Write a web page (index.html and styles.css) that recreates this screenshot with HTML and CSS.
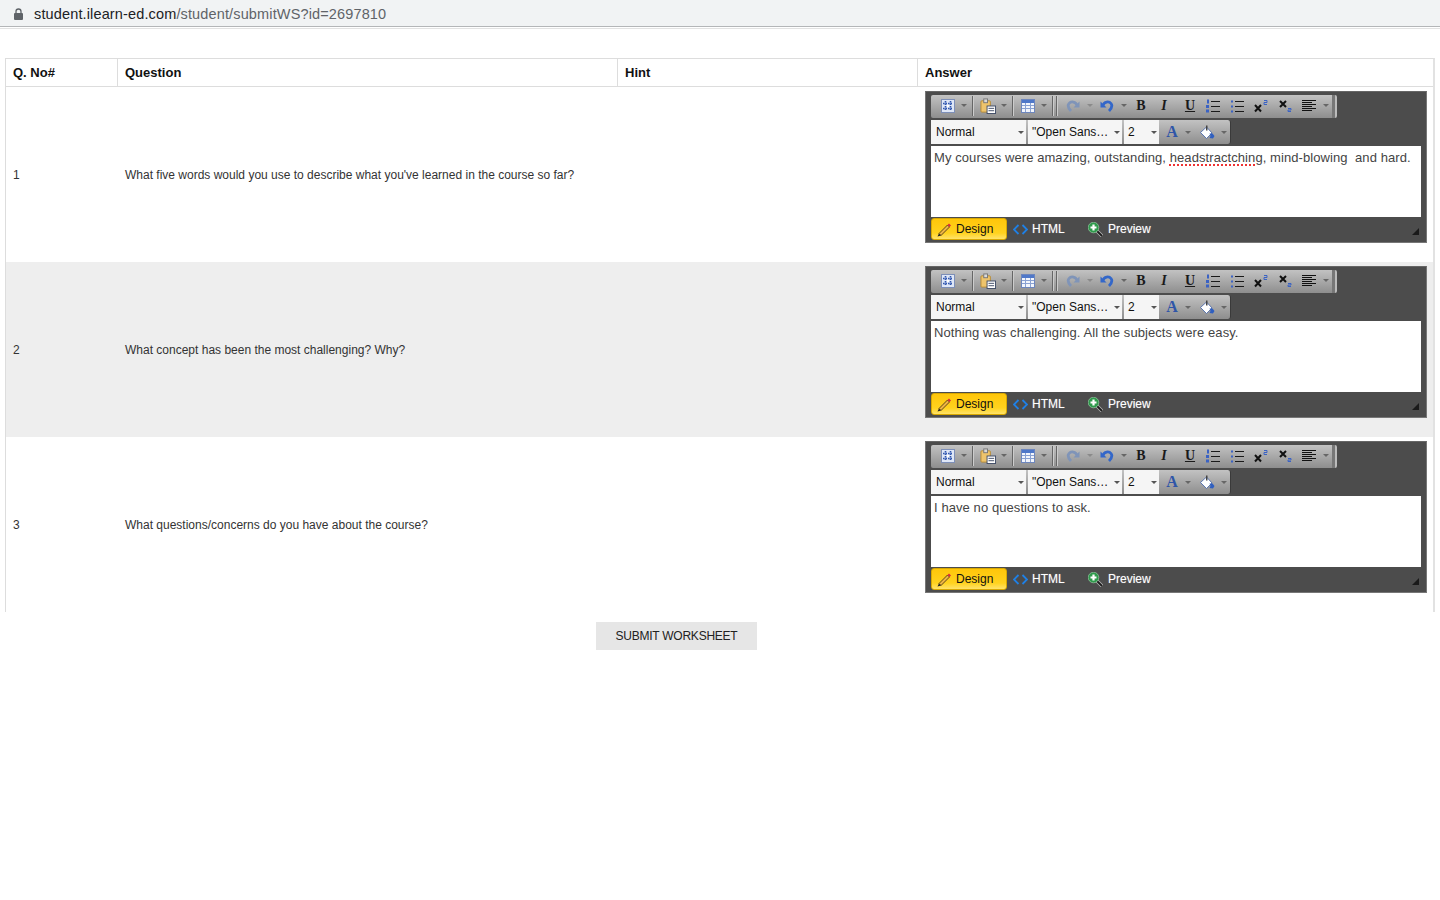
FILE: index.html
```html
<!DOCTYPE html>
<html lang="en">
<head>
<meta charset="utf-8">
<title>Submit Worksheet</title>
<link rel="stylesheet" href="styles.css">
</head>
<body>
<svg class="defs" width="0" height="0" aria-hidden="true">
  <defs>
    <symbol id="i-grid" viewBox="0 0 14 14"><rect x=".5" y=".5" width="13" height="13" fill="#dfe7f7" stroke="#7d8fb8"/><path d="M4.500 2v10M9.500 2v10M2 4.500h10M2 9.500h10" stroke="#2f56b0" stroke-width="1.600" stroke-dasharray="1.500 1"/><path d="M6 6h2v2H6z" fill="#fff"/></symbol>
    <symbol id="i-paste" viewBox="0 0 17 17"><rect x="1" y="3" width="10" height="12" rx="1" fill="#eec46c" stroke="#b58a34"/><rect x="4" y="1" width="4" height="4" fill="#d9d9d9" stroke="#777"/><rect x="7.500" y="8.500" width="9" height="8" fill="#fff" stroke="#3f4c66"/><path d="M9 11h6M9 13.500h6" stroke="#3f4c66"/></symbol>
    <symbol id="i-table" viewBox="0 0 14 14"><rect x=".5" y=".5" width="13" height="13" fill="#f3f6fc" stroke="#6d86bd"/><rect x="1" y="1" width="12" height="3" fill="#4f78c9"/><path d="M1 6.500h12M1 9.500h12M4.500 4v9M9.500 4v9" stroke="#8aa2d3"/></symbol>
    <symbol id="i-redo" viewBox="0 0 14 13"><path d="M11 6C10 2 5 1.500 3 4 1.500 6 2.500 9 5 11.500" fill="none" stroke="#7f94b8" stroke-width="2.800"/><path d="M13.500 2v6h-6z" fill="#7f94b8"/></symbol>
    <symbol id="i-undo" viewBox="0 0 14 13"><path d="M3 6C4 2 9 1.500 11 4 12.500 6 11.500 9 9 11.500" fill="none" stroke="#3367c9" stroke-width="2.800"/><path d="M.5 2v6h6z" fill="#3367c9"/></symbol>
    <symbol id="i-ol" viewBox="0 0 14 14"><path d="M5 2.500h9M5 7.500h9M5 12.500h9" stroke="#1a1a1a"/><path d="M1 .5h2v4H1zM0 6h3v3H0zM0 10.500h3v3H0z" fill="#3a62c4"/></symbol>
    <symbol id="i-ul" viewBox="0 0 14 14"><path d="M5 2.500h9M5 7.500h9M5 12.500h9" stroke="#1a1a1a"/><path d="M1 1.500h2v2H1zM1 6.500h2v2H1zM1 11.500h2v2H1z" fill="#3a62c4"/></symbol>
    <symbol id="i-sup" viewBox="0 0 14 14"><path d="M1 6l6 6.500M7 6l-6 6.500" stroke="#111" stroke-width="2"/><path d="M10 1.500h3v2h-3v2h3" fill="none" stroke="#3a62c4"/></symbol>
    <symbol id="i-sub" viewBox="0 0 14 14"><path d="M1 2l6 6M7 2L1 8" stroke="#111" stroke-width="2"/><path d="M9 9.500h3V11H9v1.500h3" fill="none" stroke="#3a62c4"/></symbol>
    <symbol id="i-align" viewBox="0 0 14 14"><path d="M0 1.500h14M0 3.500h10M0 5.500h14M0 7.500h10M0 9.500h14M0 11.500h10" stroke="#111"/></symbol>
    <symbol id="i-back" viewBox="0 0 15 14"><path d="M.5 7.500L6.500 2l5.500 6-5.500 5.500z" fill="#fff" stroke="#3d5fa8" stroke-width=".8"/><path d="M6 .5h1.500v5H6z" fill="#444"/><path d="M9.500 8.500h3l2 2.500-1.500 2.500-3.500-.5 1-2z" fill="#2f5fc0"/></symbol>
    <symbol id="i-pencil" viewBox="0 0 15 15"><path d="M2 11.500L10.500 3l2 2L4 13.500z" fill="#eeb545" stroke="#4f3a12" stroke-width=".9"/><path d="M10.500 3L12 1.500 14 3.500 12.500 5z" fill="#d8283f"/><path d="M.5 14.500L2 11.500l2 2z" fill="#222"/></symbol>
    <symbol id="i-code" viewBox="0 0 15 11"><path d="M5.500 1L1 5.500 5.500 10M9.500 1L14 5.500 9.500 10" fill="none" stroke="#1f80e6" stroke-width="1.800"/></symbol>
    <symbol id="i-zoom" viewBox="0 0 15 15"><path d="M8.500 8.500l5.500 5.500" stroke="#b5b5b5" stroke-width="3.400"/><path d="M8.500 8.500l5.500 5.500" stroke="#1c1c1c" stroke-width="1.800"/><circle cx="5.500" cy="5.500" r="5.300" fill="#2f9a4c" stroke="#a8d8b4" stroke-width=".6"/><path d="M2.500 5.500h6M5.500 2.500v6" stroke="#fff" stroke-width="2.200"/></symbol>
  </defs>
</svg>

<header class="address-bar">
  <svg class="lock" width="9" height="12" viewBox="0 0 9 12"><path d="M2 5V3.500a2.500 2.500 0 0 1 5 0V5" fill="none" stroke="#5f6368" stroke-width="1.300"/><rect y="5" width="9" height="7" rx="1" fill="#5f6368"/></svg>
  <span class="url"><span class="host">student.ilearn-ed.com</span>/student/submitWS?id=2697810</span>
</header>

<main class="page">
  <table class="sheet">
    <colgroup><col class="c-no"><col class="c-q"><col class="c-hint"><col class="c-ans"></colgroup>
    <thead>
      <tr><th>Q. No#</th><th>Question</th><th>Hint</th><th>Answer</th></tr>
    </thead>
    <tbody>
      <tr>
        <td>1</td>
        <td>What five words would you use to describe what you've learned in the course so far?</td>
        <td></td>
        <td class="answer">
          <div class="editor">
            <div class="toolbar-row">
              <div class="strip">
                <svg class="ic ml10"><use href="#i-grid"/></svg><i class="arrow a6"></i><i class="sep"></i>
                <svg class="ic w16 ml7"><use href="#i-paste"/></svg><i class="arrow"></i><i class="sep"></i>
                <svg class="ic ml8"><use href="#i-table"/></svg><i class="arrow a6"></i><i class="sep"></i><i class="sep close"></i>
                <svg class="ic ml9"><use href="#i-redo"/></svg><i class="arrow a7 dim"></i>
                <svg class="ic ml7"><use href="#i-undo"/></svg><i class="arrow a7"></i>
                <b class="tb bold">B</b><b class="tb ital">I</b><b class="tb under">U</b>
                <svg class="ic ml10"><use href="#i-ol"/></svg>
                <svg class="ic ml10"><use href="#i-ul"/></svg>
                <svg class="ic ml10"><use href="#i-sup"/></svg>
                <svg class="ic ml11"><use href="#i-sub"/></svg>
                <svg class="ic ml9"><use href="#i-align"/></svg><i class="arrow a7"></i>
              </div>
            </div>
            <div class="toolbar-row second">
              <div class="strip short">
                <span class="select s-format">Normal<i class="down"></i></span>
                <span class="select s-font">"Open Sans…<i class="down"></i></span>
                <span class="select s-size">2<i class="down"></i></span>
                <b class="fore">A</b><i class="arrow a7"></i>
                <svg class="ic w15 ml9"><use href="#i-back"/></svg><i class="arrow a6"></i>
              </div>
            </div>
            <div class="content">My courses were amazing, outstanding, <span class="misspelt">headstractching</span>, mind-blowing&nbsp; and hard.</div>
            <div class="modes">
              <span class="mode active"><svg class="mode-ic"><use href="#i-pencil"/></svg>Design</span>
              <span class="mode html"><svg class="mode-ic code"><use href="#i-code"/></svg>HTML</span>
              <span class="mode preview"><svg class="mode-ic"><use href="#i-zoom"/></svg>Preview</span>
              <i class="grip"></i>
            </div>
          </div>
        </td>
      </tr>
      <tr class="alt">
        <td>2</td>
        <td>What concept has been the most challenging? Why?</td>
        <td></td>
        <td class="answer">
          <div class="editor">
            <div class="toolbar-row">
              <div class="strip">
                <svg class="ic ml10"><use href="#i-grid"/></svg><i class="arrow a6"></i><i class="sep"></i>
                <svg class="ic w16 ml7"><use href="#i-paste"/></svg><i class="arrow"></i><i class="sep"></i>
                <svg class="ic ml8"><use href="#i-table"/></svg><i class="arrow a6"></i><i class="sep"></i><i class="sep close"></i>
                <svg class="ic ml9"><use href="#i-redo"/></svg><i class="arrow a7 dim"></i>
                <svg class="ic ml7"><use href="#i-undo"/></svg><i class="arrow a7"></i>
                <b class="tb bold">B</b><b class="tb ital">I</b><b class="tb under">U</b>
                <svg class="ic ml10"><use href="#i-ol"/></svg>
                <svg class="ic ml10"><use href="#i-ul"/></svg>
                <svg class="ic ml10"><use href="#i-sup"/></svg>
                <svg class="ic ml11"><use href="#i-sub"/></svg>
                <svg class="ic ml9"><use href="#i-align"/></svg><i class="arrow a7"></i>
              </div>
            </div>
            <div class="toolbar-row second">
              <div class="strip short">
                <span class="select s-format">Normal<i class="down"></i></span>
                <span class="select s-font">"Open Sans…<i class="down"></i></span>
                <span class="select s-size">2<i class="down"></i></span>
                <b class="fore">A</b><i class="arrow a7"></i>
                <svg class="ic w15 ml9"><use href="#i-back"/></svg><i class="arrow a6"></i>
              </div>
            </div>
            <div class="content">Nothing was challenging. All the subjects were easy.</div>
            <div class="modes">
              <span class="mode active"><svg class="mode-ic"><use href="#i-pencil"/></svg>Design</span>
              <span class="mode html"><svg class="mode-ic code"><use href="#i-code"/></svg>HTML</span>
              <span class="mode preview"><svg class="mode-ic"><use href="#i-zoom"/></svg>Preview</span>
              <i class="grip"></i>
            </div>
          </div>
        </td>
      </tr>
      <tr>
        <td>3</td>
        <td>What questions/concerns do you have about the course?</td>
        <td></td>
        <td class="answer">
          <div class="editor">
            <div class="toolbar-row">
              <div class="strip">
                <svg class="ic ml10"><use href="#i-grid"/></svg><i class="arrow a6"></i><i class="sep"></i>
                <svg class="ic w16 ml7"><use href="#i-paste"/></svg><i class="arrow"></i><i class="sep"></i>
                <svg class="ic ml8"><use href="#i-table"/></svg><i class="arrow a6"></i><i class="sep"></i><i class="sep close"></i>
                <svg class="ic ml9"><use href="#i-redo"/></svg><i class="arrow a7 dim"></i>
                <svg class="ic ml7"><use href="#i-undo"/></svg><i class="arrow a7"></i>
                <b class="tb bold">B</b><b class="tb ital">I</b><b class="tb under">U</b>
                <svg class="ic ml10"><use href="#i-ol"/></svg>
                <svg class="ic ml10"><use href="#i-ul"/></svg>
                <svg class="ic ml10"><use href="#i-sup"/></svg>
                <svg class="ic ml11"><use href="#i-sub"/></svg>
                <svg class="ic ml9"><use href="#i-align"/></svg><i class="arrow a7"></i>
              </div>
            </div>
            <div class="toolbar-row second">
              <div class="strip short">
                <span class="select s-format">Normal<i class="down"></i></span>
                <span class="select s-font">"Open Sans…<i class="down"></i></span>
                <span class="select s-size">2<i class="down"></i></span>
                <b class="fore">A</b><i class="arrow a7"></i>
                <svg class="ic w15 ml9"><use href="#i-back"/></svg><i class="arrow a6"></i>
              </div>
            </div>
            <div class="content">I have no questions to ask.</div>
            <div class="modes">
              <span class="mode active"><svg class="mode-ic"><use href="#i-pencil"/></svg>Design</span>
              <span class="mode html"><svg class="mode-ic code"><use href="#i-code"/></svg>HTML</span>
              <span class="mode preview"><svg class="mode-ic"><use href="#i-zoom"/></svg>Preview</span>
              <i class="grip"></i>
            </div>
          </div>
        </td>
      </tr>
    </tbody>
  </table>
  <div class="actions"><button class="submit" type="button">SUBMIT WORKSHEET</button></div>
</main>
</body>
</html>
```
FILE: styles.css
```css
* { box-sizing: border-box; }
html, body { margin: 0; padding: 0; background: #fff; }
body { font-family: "Liberation Sans", Arial, sans-serif; color: #222; font-size: 12px; }
.defs { position: absolute; }

.address-bar { height: 27px; background: #f1f3f4; border-bottom: 1px solid #b4b6b8; box-shadow: 0 1px 0 #fff, 0 2px 0 #e2e2e2; display: flex; align-items: center; padding: 2px 0 0 14px; }
.lock { margin-right: 11px; flex: none; }
.url { font-size: 14.5px; color: #5f6368; letter-spacing: .14px; }
.host { color: #202124; }

.page { padding: 31px 5px 0 5px; }
.sheet { width: 1430px; table-layout: fixed; border-collapse: separate; border-spacing: 0; border-top: 1px solid #ddd; border-left: 1px solid #ddd; border-right: 2px solid #e2e2e2; font-size: 12px; }
.c-no { width: 111px; }
.c-q { width: 500px; }
.c-hint { width: 300px; }
.c-ans { width: 516px; }
th { height: 28px; text-align: left; font-size: 13px; font-weight: 700; color: #111; padding: 0 7px; border-bottom: 1px solid #ddd; border-left: 1px solid #ddd; }
th:first-child { border-left: 0; }
td { height: 175px; padding: 0 7px 0 8px; vertical-align: middle; color: #333; }
td:first-child { padding-left: 7px; }
.alt td { background: #eee; }
td.answer { padding: 4px 7px 0 8px; vertical-align: top; }

.editor { width: 502px; height: 152px; background: #4c4c4c; border: 1px solid #777; border-top-color: #666; padding: 3px 5px 0 5px; display: flex; flex-direction: column; }
.toolbar-row { height: 24px; display: flex; }
.second { margin-top: 1px; height: 25px; }
.strip { width: 406px; height: 23px; padding-bottom: 2px; background: linear-gradient(#c2c2c2, #8e8e8e); border-radius: 2px; border-right: 2px solid #bbb; box-shadow: inset -3px 0 0 #777; display: flex; align-items: center; }
.short { width: 300px; height: 24px; padding-bottom: 0; border-right: 1px solid #3a3a3a; box-shadow: none; border-radius: 0 3px 3px 0; }
.ic { flex: none; width: 14px; height: 14px; }
.w15 { width: 15px; }
.w16 { width: 16px; height: 16px; }
.ml7 { margin-left: 7px; }
.ml8 { margin-left: 8px; }
.ml9 { margin-left: 9px; }
.ml10 { margin-left: 10px; }
.ml11 { margin-left: 11px; }
.arrow { flex: none; width: 0; height: 0; margin-left: 5px; border: 3px solid transparent; border-top: 3px solid #666; border-bottom: 0; }
.a6 { margin-left: 6px; }
.a7 { margin-left: 7px; }
.dim { border-top-color: #8a8a8a; }
.sep { flex: none; width: 1px; height: 20px; margin-left: 5px; background: #666; box-shadow: 1px 0 0 #ccc; }
.close { margin-left: 3px; }
.tb { flex: none; font-family: "Liberation Serif", serif; font-size: 14px; font-weight: 700; color: #1a1a1a; text-align: center; width: 12px; line-height: 14px; }
.bold { margin-left: 8px; }
.ital { margin-left: 11px; font-style: italic; }
.under { margin-left: 14px; text-decoration: underline; }
.fore { flex: none; width: 12px; margin-left: 7px; font-family: "Liberation Serif", serif; font-size: 16px; line-height: 16px; color: #2f55a8; text-align: center; }

.select { flex: none; height: 24px; background: #f5f5f5; color: #111; font-size: 12px; line-height: 24px; padding-left: 4px; margin-right: 2px; position: relative; white-space: nowrap; }
.s-format { width: 95px; padding-left: 5px; }
.s-font { width: 94px; }
.s-size { width: 35px; margin-right: 0; }
.down { position: absolute; right: 2px; top: 11px; width: 0; height: 0; border: 3px solid transparent; border-top: 3px solid #555; border-bottom: 0; }

.content { width: 490px; height: 71px; margin-top: 1px; background: #fff; color: #444; font-size: 13px; letter-spacing: .08px; line-height: 15px; padding: 4px 3px; white-space: nowrap; }
.misspelt { text-decoration: underline dotted #e33; text-decoration-thickness: 2px; text-underline-offset: 2px; }

.modes { flex: none; height: 24px; display: flex; align-items: center; position: relative; color: #fff; font-size: 12px; text-shadow: 0 0 1px rgba(255, 255, 255, .45); }
.mode { display: flex; align-items: center; white-space: nowrap; }
.mode-ic { width: 15px; height: 15px; margin-right: 5px; flex: none; }
.mode-ic.code { height: 11px; margin-right: 4px; }
.active { width: 76px; height: 22px; margin-right: 6px; padding-left: 6px; background: linear-gradient(#ffc60a, #ffd21e 70%, #ffe36a); border: 1px solid #d9a800; border-radius: 3px; color: #111; text-shadow: none; }
.active .mode-ic { margin-right: 4px; margin-left: -1px; }
.html { width: 75px; }
.grip { position: absolute; right: 2px; bottom: 6px; width: 0; height: 0; border-left: 7px solid transparent; border-bottom: 7px solid #1a1a1a; }

.actions { padding: 10px 0 0 591px; }
.submit { display: block; width: 161px; height: 28px; padding: 0; border: 0; background: #e6e6e6; color: #222; font: 12px "Liberation Sans", Arial, sans-serif; letter-spacing: -.25px; }
```
